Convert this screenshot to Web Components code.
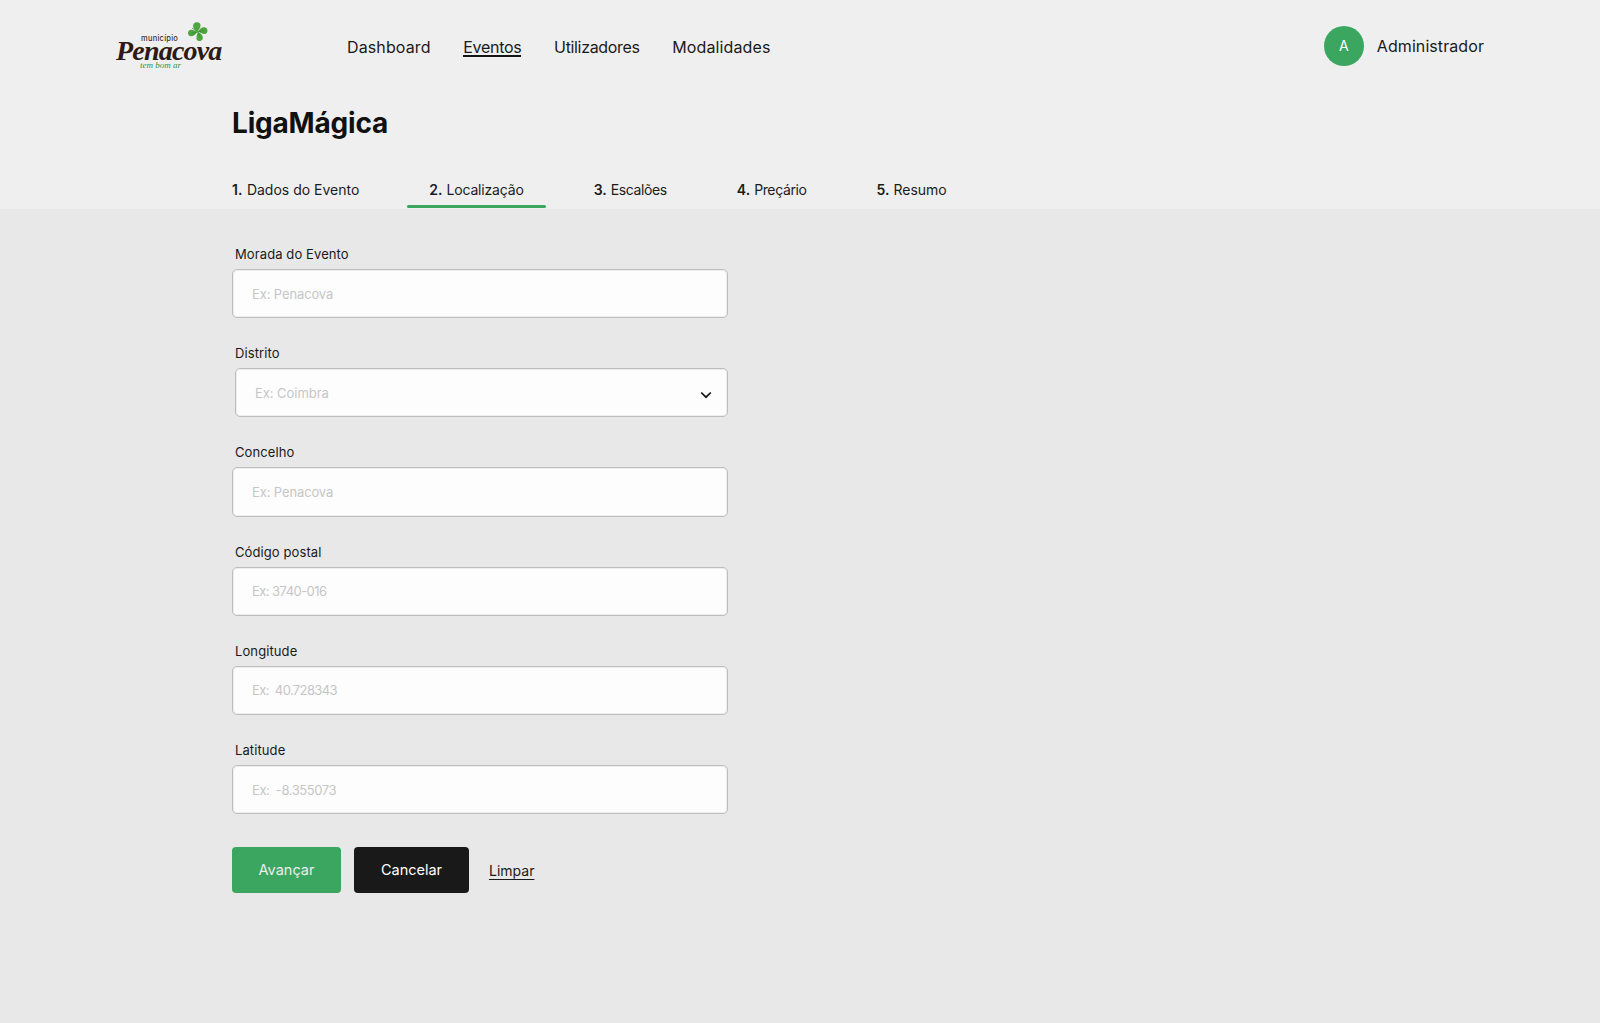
<!DOCTYPE html>
<html lang="pt"><head><meta charset="utf-8"><title>LigaMágica</title>
<style>
html,body{margin:0;padding:0;height:100%}
body{background:#e8e8e8;font-family:Inter,"Liberation Sans",sans-serif;color:#141414}
</style></head><body>
<app-shell>
  <site-header></site-header>
  <page-head title="LigaMágica"></page-head>
  <event-form></event-form>
</app-shell>
<script>
const def=(n,html)=>customElements.define(n,class extends HTMLElement{connectedCallback(){if(this.shadowRoot)return;const s=this.attachShadow({mode:'open'});s.innerHTML=typeof html==='function'?html(this):html;}});
def('app-shell',`<style>:host{display:block;min-height:1023px;background:#e8e8e8}</style><slot></slot>`);
def('site-logo',`<style>
:host{display:block;width:108px;height:56px;position:relative;color:#2e1a14}
.m{position:absolute;left:25px;top:19px;font:500 7.5px/6px Inter,sans-serif;color:#40302c;letter-spacing:.25px}
.p{position:absolute;left:0;top:25px;font:italic 700 28px/17px "Liberation Serif",serif;letter-spacing:-.8px;white-space:nowrap}
.t{position:absolute;left:24px;top:44px;font:italic 400 9px/8px "Liberation Serif",serif;color:#2f9444;white-space:nowrap}
svg{position:absolute;left:71px;top:4px;width:22px;height:22px}
</style>
<span class="m">município</span><span class="p">Penacova</span><span class="t">tem bom ar</span>
<svg viewBox="0 0 22 22"><g fill="#4fa63f"><path d="M10.500 10.500C8 9 5 6.500 6.500 3C8 .5 12.500 0.500 13.500 3.500C14 6 12 8.500 10.500 10.500Z"/><path d="M11 10.500C12.500 8 15.500 5.500 18.500 6.500C21.500 8 21 12.500 18 13C15.500 13.300 13 11.500 11 10.500Z"/><path d="M11 11C13.500 12 16.500 14.500 15.800 17.800C14.500 20.800 10.500 20.800 9.500 18C9 15.500 10.300 13 11 11Z"/><path d="M10.500 11C8.500 13.500 6 16 3 15.200C0 13.500 .5 9.500 3.500 8.800C6 8.500 8.500 9.800 10.500 11Z"/></g><path d="M5 7L10.700 10.800M17 9.500L10.700 10.800M13 16L10.700 10.800M4.500 12.500L10.700 10.800" stroke="#2f8a35" stroke-width=".7" fill="none"/></svg>`);
def('site-header',`<style>
:host{display:flex;align-items:center;height:92px;padding:0 116px;background:#efefef;font:400 16px/24px Inter,sans-serif;color:#1a1a1a}
site-logo{margin-right:123px;margin-top:-2px}
nav{display:flex;gap:32.700px;flex:1;margin-top:1px}
a{color:inherit;text-decoration:none;letter-spacing:.12px;height:24px}
a.on{box-shadow:0 2px 0 #141414;height:20px;line-height:24px;letter-spacing:-.3px;margin-bottom:4px}
a.t{letter-spacing:-.34px}
.u{display:flex;align-items:center;gap:13px}
.u span{letter-spacing:.08px}
.av{width:40px;height:40px;border-radius:50%;background:#3ba660;color:#fff;display:flex;align-items:center;justify-content:center;font-size:14px}
</style>
<site-logo></site-logo>
<nav><a>Dashboard</a><a class="on">Eventos</a><a class="t">Utilizadores</a><a>Modalidades</a></nav>
<div class="u"><div class="av">A</div><span>Administrador</span></div>`);
def('step-tab',h=>`<style>
:host{display:flex;align-items:flex-start;padding:0 22px;height:28px;font:400 14px/20px Inter,sans-serif;color:#1c1c1c;white-space:pre;box-sizing:border-box;position:relative}
:host([active])::after{content:"";position:absolute;left:0;right:0;bottom:0;height:3px;border-radius:2px;background:#3ba660}
b{font-weight:600;margin-right:${h.getAttribute('gap')||4}px}
span{letter-spacing:${h.getAttribute('ls')||0}px}
</style><b>${h.getAttribute('n')}.</b><span><slot></slot></span>`);
def('page-head',h=>`<style>
:host{display:block;background:#efefef;height:117px;padding-left:232px;box-sizing:border-box}
h1{margin:0;padding-top:11px;font:700 28px/40px Inter,sans-serif;color:#111;letter-spacing:-.2px}
.tabs{display:flex;gap:26px;margin:37px 0 0 -22px;}
</style><h1>${h.getAttribute('title')}</h1>
<div class="tabs"><step-tab n="1" gap="4.5">Dados do Evento</step-tab><step-tab n="2" active ls="-.18">Localização</step-tab><step-tab n="3" ls="-.38">Escalões</step-tab><step-tab n="4" ls="-.38">Preçário</step-tab><step-tab n="5">Resumo</step-tab></div>`);
def('form-field',h=>{const sel=h.hasAttribute('select');return `<style>
:host{display:block;font:400 13px/19px Inter,sans-serif;color:#1a1a1a}
label{display:block;margin:0 0 6px 3px;height:19px;padding-top:1px;box-sizing:border-box;letter-spacing:.1px}
.box{box-sizing:border-box;height:49.200px;background:#fdfdfd;border:1px solid #bdbdbd;box-shadow:inset 0 0 0 1px #eeeeee;border-radius:5px;display:flex;align-items:center;justify-content:space-between;padding:1px 19px 0;color:#c6c6c6;${sel?'margin-left:3px;':''}}
.ph{white-space:pre;letter-spacing:${h.getAttribute('ls')||0}px}
svg{width:12px;height:8px;margin:3px -4px 0 0}
</style><label>${h.getAttribute('label')}</label><div class="box"><span class="ph">${h.getAttribute('ph')}</span>${sel?'<svg viewBox="0 0 12 8"><path d="M1.200 1.500L6 6.200L10.800 1.500" fill="none" stroke="#141414" stroke-width="1.700"/></svg>':''}</div>`});
def('ui-button',`<style>
:host{display:inline-flex;align-items:center;justify-content:center;height:46px;border-radius:4px;font:400 14.500px/20px Inter,sans-serif;color:#fff;box-sizing:border-box}
:host([green]){background:#3ba660;width:109px;color:#ececec}
:host([dark]){background:#191919;width:115px}
</style><slot></slot>`);
def('event-form',`<style>
:host{display:block;padding:35px 0 0 232px;width:496px}
.f{display:flex;flex-direction:column;gap:25px}
.a{display:flex;align-items:center;gap:13px;margin-top:33px}
a{margin:2px 0 0 7px;font:400 14px/20px Inter,sans-serif;color:#1a1a1a;text-decoration:underline;text-underline-offset:3px}
</style>
<div class="f">
<form-field label="Morada do Evento" ph="Ex: Penacova" ls="-.12"></form-field>
<form-field label="Distrito" ph="Ex: Coimbra" ls="-.05" select></form-field>
<form-field label="Concelho" ph="Ex: Penacova" ls="-.12"></form-field>
<form-field label="Código postal" ph="Ex: 3740-016" ls="-.55"></form-field>
<form-field label="Longitude" ph="Ex:  40.728343" ls="-.62"></form-field>
<form-field label="Latitude" ph="Ex:  -8.355073" ls="-.42"></form-field>
</div>
<div class="a"><ui-button green>Avançar</ui-button><ui-button dark>Cancelar</ui-button><a>Limpar</a></div>`);
</script>
</body></html>
